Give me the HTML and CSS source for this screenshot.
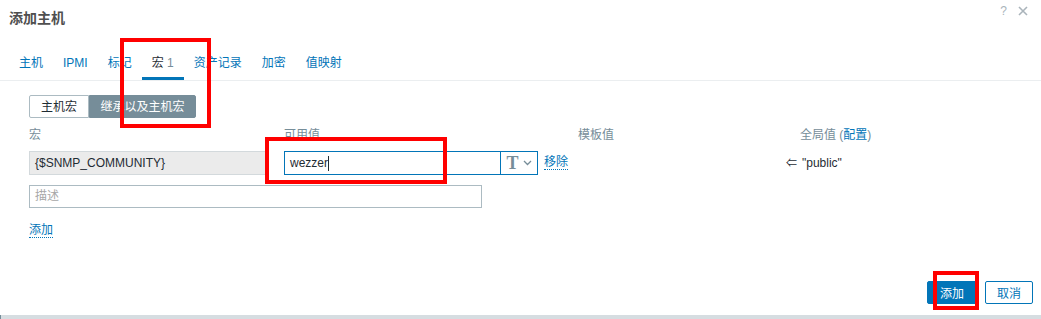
FILE: index.html
```html
<!DOCTYPE html>
<html lang="zh">
<head>
<meta charset="utf-8">
<title>添加主机</title>
<link rel="stylesheet" href="styles.css">
</head>
<body>
<div class="dialog">
  <div class="header">
    <h1 class="title">添加主机</h1>
    <div class="header-icons">
      <span class="help">?</span>
      <svg class="close" width="10" height="10" viewBox="0 0 10 10"><path d="M1 1L9 9M9 1L1 9" stroke="#aab4bb" stroke-width="1.6" fill="none"/></svg>
    </div>
  </div>
  <ul class="tabs">
    <li class="tab">主机</li>
    <li class="tab">IPMI</li>
    <li class="tab">标记</li>
    <li class="tab active">宏 <span class="count">1</span></li>
    <li class="tab">资产记录</li>
    <li class="tab">加密</li>
    <li class="tab">值映射</li>
  </ul>
  <div class="content">
    <div class="seg">
      <span class="seg-item">主机宏</span>
      <span class="seg-item on">继承以及主机宏</span>
    </div>
    <div class="grid">
      <div class="lbl">宏</div>
      <div class="lbl">可用值</div>
      <div class="lbl">模板值</div>
      <div class="lbl">全局值 (<a class="cfg">配置</a>)</div>

      <div class="macro">{$SNMP_COMMUNITY}</div>
      <div class="valgroup">
        <div class="val">wezzer<span class="caret"></span></div>
        <div class="tbtn"><span class="tglyph">T</span><svg width="9" height="6" viewBox="0 0 9 6"><path d="M1 1L4.5 4.5L8 1" stroke="#768d99" stroke-width="1.3" fill="none"/></svg></div>
        <a class="link remove">移除</a>
      </div>
      <div></div>
      <div class="global"><span class="arrow">⇐</span>"public"</div>
    </div>
    <div class="desc">描述</div>
    <div class="addrow"><a class="link">添加</a></div>
  </div>
  <div class="footer">
    <button class="btn primary">添加</button>
    <button class="btn">取消</button>
  </div>
  <div class="bottombar"></div>

  <div class="mark m1"></div>
  <div class="mark m2"></div>
  <div class="mark m3"></div>
</div>
</body>
</html>
```

FILE: styles.css
```css
* { box-sizing: border-box; }
html, body { margin: 0; padding: 0; }
body {
  width: 1041px;
  height: 319px;
  overflow: hidden;
  background: #fff;
  font-family: "Liberation Sans", Arial, "Noto Sans CJK SC", sans-serif;
  font-size: 12px;
  color: #1f2c33;
}
.dialog {
  position: relative;
  width: 1041px;
  height: 319px;
  display: flex;
  flex-direction: column;
}
.header {
  height: 36px;
  display: flex;
  justify-content: space-between;
  align-items: flex-start;
  padding: 0 9px;
}
.title {
  margin: 0;
  font-size: 14px;
  line-height: 36px;
  font-weight: bold;
  color: #4f4f4f;
}
.header-icons {
  display: flex;
  align-items: center;
  gap: 11px;
  padding-top: 4px;
  padding-right: 4px;
}
.help {
  color: #aab4bb;
  font-size: 12px;
  line-height: 14px;
}
.tabs {
  list-style: none;
  margin: 11px 0 0 0;
  padding: 0 0 0 9px;
  display: flex;
  border-bottom: 1px solid #ebeef0;
}
.tab {
  padding: 9px 10px 7px;
  line-height: 14px;
  color: #0275b8;
  border-bottom: 3px solid transparent;
}
.tab.active {
  color: #1f2c33;
  border-bottom-color: #0275b8;
}
.count { color: #768d99; }
.content {
  padding: 14px 0 0 29px;
}
.seg {
  display: inline-flex;
  height: 23px;
}
.seg-item {
  display: flex;
  align-items: center;
  justify-content: center;
  line-height: 14px;
  border: 1px solid #acbbc2;
}
.seg-item:first-child {
  width: 60px;
  border-radius: 2px 0 0 2px;
  color: #1f2c33;
  background: #fff;
}
.seg-item.on {
  width: 107px;
  background: #768d99;
  border-color: #768d99;
  color: #fff;
  border-radius: 0 2px 2px 0;
}
.grid {
  display: grid;
  grid-template-columns: 255px 294px 222px 1fr;
  row-gap: 9px;
  margin-top: 10px;
}
.lbl {
  line-height: 14px;
  color: #768d99;
}
.cfg { color: #0275b8; }
.macro {
  width: 238px;
  height: 24px;
  background: #ebebeb;
  border: 1px solid #d3d9dc;
  padding: 0 5px;
  line-height: 22px;
  color: #1f2c33;
}
.valgroup {
  display: flex;
  align-items: center;
  height: 24px;
}
.val {
  width: 217px;
  height: 24px;
  border: 1px solid #0275b8;
  padding: 0 5px;
  line-height: 22px;
  color: #1f2c33;
  display: flex;
  align-items: center;
}
.caret {
  display: inline-block;
  width: 1px;
  height: 15px;
  background: #1f2c33;
}
.tbtn {
  width: 37px;
  height: 24px;
  border: 1px solid #0275b8;
  border-left: none;
  display: flex;
  align-items: center;
  justify-content: center;
  gap: 4px;
}
.tglyph {
  font-family: "Liberation Serif", "Times New Roman", serif;
  font-weight: bold;
  font-size: 18px;
  line-height: 18px;
  color: #768d99;
}
.link {
  color: #0275b8;
  border-bottom: 1px dotted #0275b8;
  line-height: 13px;
}
.remove { margin-left: 6px; }
.global {
  line-height: 24px;
  color: #1f2c33;
}
.arrow {
  font-size: 11px;
  margin-left: -14px;
  margin-right: 5px;
}
.desc {
  margin-top: 10px;
  width: 453px;
  height: 23px;
  border: 1px solid #acbbc2;
  padding: 0 5px;
  line-height: 21px;
  color: #a7a7a7;
}
.addrow {
  margin-top: 15px;
  line-height: 14px;
}
.footer {
  margin-top: auto;
  display: flex;
  justify-content: flex-end;
  gap: 8px;
  padding: 0 8px 11px 0;
}
.btn {
  height: 23px;
  width: 48px;
  font-family: inherit;
  font-size: 12px;
  border: 1px solid #0275b8;
  border-radius: 2px;
  background: #fff;
  color: #0275b8;
  padding: 0;
}
.btn.primary {
  width: 50px;
  background: #0275b8;
  color: #fff;
}
.bottombar {
  height: 4px;
  background: #d6dde1;
  border-left: 1px solid #768d99;
}
.mark {
  position: absolute;
  border: 4px solid #ff0000;
}
.m1 { left: 120px; top: 38px; width: 91px; height: 90px; }
.m2 { left: 265px; top: 137px; width: 182px; height: 47px; }
.m3 { left: 933px; top: 271px; width: 46px; height: 39px; }
```
